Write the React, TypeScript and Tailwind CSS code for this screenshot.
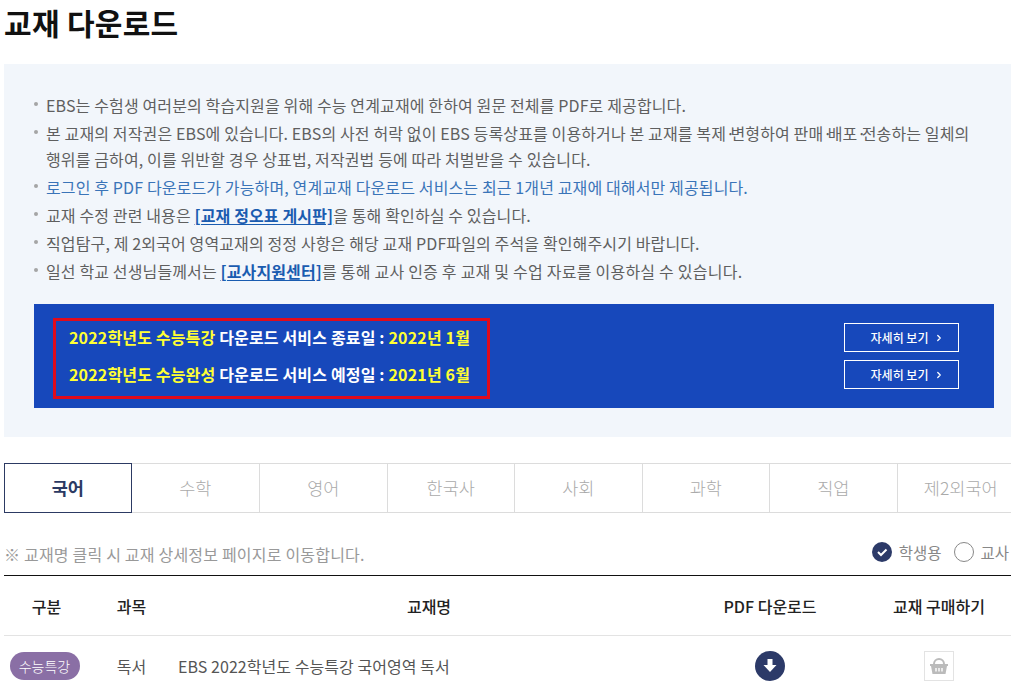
import React from "react";
import { ChevronRight } from "lucide-react";

const subjects = ["국어", "수학", "영어", "한국사", "사회", "과학", "직업", "제2외국어"];

const Bullet = ({ children, blue }: { children: React.ReactNode; blue?: boolean }) => (
  <li className={`flex text-[16px] leading-[26px] tracking-[0.13px] break-keep ${blue ? "text-[#3a74b8]" : "text-[#5f5f5f]"}`}>
    <span className="w-3 shrink-0 pt-[10px]">
      <span className="block w-1 h-1 rounded-full bg-[#a5a5a5]"></span>
    </span>
    <span className="flex-1">{children}</span>
  </li>
);

const NoticeLink = ({ children }: { children: React.ReactNode }) => (
  <a className="font-bold text-[#1a5cb0] underline underline-offset-2">{children}</a>
);

// the CJK font's middle dot is too wide, the reference has a narrow one
const Dot = () => <span className="tracking-[-4.6px]">·</span>;

const MoreButton = () => (
  <button className="w-[115px] h-[29px] border border-white flex items-center justify-center pl-[12px] gap-[6px] text-white text-[12px] font-medium">
    <span>자세히 보기</span>
    <ChevronRight size={10} strokeWidth={3} />
  </button>
);

const App = () => {
  return (
    <div
      className="w-[1011px] h-[695px] overflow-hidden bg-white pl-1"
      style={{ fontFamily: '"Noto Sans CJK KR", "Noto Sans", sans-serif' }}
    >
      <div className="w-[1020px]">
        <h1 className="h-[64px] text-[30px] leading-[44px] font-bold text-[#111] tracking-[0.3px]">교재 다운로드</h1>

        <div className="h-[373px] bg-[#f2f6fb] pt-[28px] pl-[30px]">
          <ul className="w-[945px] flex flex-col gap-[2px]">
            <Bullet>EBS는 수험생 여러분의 학습지원을 위해 수능 연계교재에 한하여 원문 전체를 PDF로 제공합니다.</Bullet>
            <Bullet>
              <span className="block">
                본 교재의 저작권은 EBS에 있습니다. EBS의 사전 허락 없이 EBS 등록상표를 이용하거나 본 교재를 복제<Dot />변형하여 판매<Dot />배포<Dot />전송하는 일체의
              </span>
              <span className="block">행위를 금하여, 이를 위반할 경우 상표법, 저작권법 등에 따라 처벌받을 수 있습니다.</span>
            </Bullet>
            <Bullet blue>로그인 후 PDF 다운로드가 가능하며, 연계교재 다운로드 서비스는 최근 1개년 교재에 대해서만 제공됩니다.</Bullet>
            <Bullet>
              교재 수정 관련 내용은 <NoticeLink>[교재 정오표 게시판]</NoticeLink>을 통해 확인하실 수 있습니다.
            </Bullet>
            <Bullet>직업탐구, 제 2외국어 영역교재의 정정 사항은 해당 교재 PDF파일의 주석을 확인해주시기 바랍니다.</Bullet>
            <Bullet>
              일선 학교 선생님들께서는 <NoticeLink>[교사지원센터]</NoticeLink>
              <span className="tracking-[0.23px]">를 통해 교사 인증 후 교재 및 수업 자료를 이용하실 수 있습니다.</span>
            </Bullet>
          </ul>

          <div className="w-[960px] h-[104px] mt-[20px] bg-[#1748bb] flex items-center justify-between pl-[19px] pr-[35px]">
            <div className="w-[437px] h-[81px] mt-[5px] pb-[7px] border-[3px] border-[#e00b1c] flex flex-col justify-center gap-[9px] pl-[13px] text-[16px] leading-[28px] font-bold text-white tracking-[0.16px]">
              <p>
                <span className="text-[#ffff33]">2022학년도 수능특강</span> 다운로드 서비스 종료일 : <span className="text-[#ffff33]">2022년 1월</span>
              </p>
              <p>
                <span className="text-[#ffff33]">2022학년도 수능완성</span> 다운로드 서비스 예정일 : <span className="text-[#ffff33]">2021년 6월</span>
              </p>
            </div>
            <div className="flex flex-col gap-[8px]">
              <MoreButton />
              <MoreButton />
            </div>
          </div>
        </div>

        <div className="mt-[26px] h-[50px] grid grid-cols-8 border-y border-[#dcdcdc]">
          {subjects.map((s, i) =>
            i === 0 ? (
              <div key={s} className="-my-px border border-[#2c3a63] flex items-center justify-center text-[17.5px] font-bold text-[#2c3a63]">
                {s}
              </div>
            ) : (
              <div
                key={s}
                className={`flex items-center justify-center text-[17.5px] font-light text-[#aaa] ${i > 1 ? "border-l border-[#dcdcdc]" : ""}`}
              >
                {s}
              </div>
            )
          )}
        </div>

        <div className="w-[1007px] mt-[26px] h-[37px] flex items-start justify-between border-b border-[#111]">
          <p className="text-[16px] leading-[30px] tracking-[0.2px] text-[#999]">※ 교재명 클릭 시 교재 상세정보 페이지로 이동합니다.</p>
          <div className="flex items-center text-[15.5px] leading-[28px] text-[#888] -mt-[1px] pr-[2px]">
            <svg width="20" height="20" viewBox="0 0 20 20" className="mr-[7px]">
              <circle cx="10" cy="10" r="10" fill="#2c3a68" />
              <path d="M6 10l3 3 5.5-5.5" fill="none" stroke="#fff" strokeWidth="2" />
            </svg>
            <span>학생용</span>
            <span className="ml-[13px] mr-[6px] w-5 h-5 rounded-full border border-[#888] bg-white"></span>
            <span>교사</span>
          </div>
        </div>

        <div className="h-[60px] grid grid-cols-[85px_85px_510px_172px_166px] items-center border-b border-[#e3e3e3] text-[16px] font-medium text-[#222] text-center">
          <span>구분</span>
          <span>과목</span>
          <span>교재명</span>
          <span>PDF 다운로드</span>
          <span>교재 구매하기</span>
        </div>

        <div className="h-[60px] grid grid-cols-[85px_85px_510px_172px_166px] items-center text-[16px] text-[#555] text-center">
          <span className="flex justify-center -ml-[4px]">
            <span className="w-[70px] h-[28px] rounded-full bg-[#8a6fa5] text-white text-[14px] leading-[28px] font-light">수능특강</span>
          </span>
          <span>독서</span>
          <span className="text-left pl-[4px] tracking-[0.05px]">EBS 2022학년도 수능특강 국어영역 독서</span>
          <span className="flex justify-center">
            <svg width="30" height="30" viewBox="0 0 30 30">
              <circle cx="15" cy="15" r="15" fill="#2c3a68" />
              <path d="M12.5 8h5v6h4l-6.5 7-6.5-7h4z" fill="#fff" />
            </svg>
          </span>
          <span className="flex justify-center">
            <span className="w-[30px] h-[30px] border border-[#e3e3e3] flex items-center justify-center">
              <svg width="20" height="20" viewBox="0 0 20 20">
                <path d="M5 8a5 5 0 0 1 10 0" fill="none" stroke="#bbb" strokeWidth="2" />
                <path d="M1 8h18v2h-1l-1.5 8h-13L2 10H1z" fill="#bbb" />
                <path d="M7 12v3.5M10 12v3.5M13 12v3.5" stroke="#fff" strokeWidth="1.4" />
              </svg>
            </span>
          </span>
        </div>
      </div>
    </div>
  );
};

export default App;
